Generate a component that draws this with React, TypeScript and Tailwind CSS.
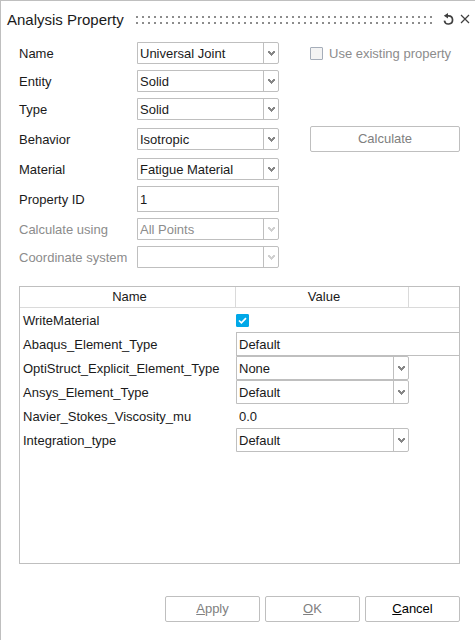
import React from 'react'

interface ComboProps {
  id?: string
  label?: string
  value: string
  disabled?: boolean
  className?: string
}

const comboBase =
  'block w-full appearance-none rounded-r-[2px] border border-[#bfbfbf] bg-white pt-[2px] pr-4 pl-[2px] outline-none disabled:text-[#8c8c8c] disabled:opacity-100'

function Combo({ id, label, value, disabled, className = 'h-[22px]' }: ComboProps) {
  return (
    <div className="relative">
      <select
        id={id}
        aria-label={label}
        defaultValue={value}
        disabled={disabled}
        className={`${comboBase} ${className}`}
      >
        <option value={value}>{value}</option>
      </select>
      <span className="pointer-events-none absolute inset-y-px right-px flex w-[15px] items-center justify-center border-l border-[#bfbfbf] pt-px pl-px">
        <svg
          width="7"
          height="5"
          viewBox="0 0 7 5"
          className={disabled ? 'text-[#d0d0d0]' : 'text-[#868686]'}
          fill="currentColor"
          shapeRendering="crispEdges"
          aria-hidden="true"
        >
          <path d="M0 0h2v1h1v1h1V1h1V0h2v2H6v1H5v1H4v1H3V4H2V3H1V2H0z" />
        </svg>
      </span>
    </div>
  )
}

interface Field {
  id: string
  label: string
  value: string
  kind: 'combo' | 'text'
  disabled?: boolean
}

const fields: Field[] = [
  { id: 'name', label: 'Name', value: 'Universal Joint', kind: 'combo' },
  { id: 'entity', label: 'Entity', value: 'Solid', kind: 'combo' },
  { id: 'type', label: 'Type', value: 'Solid', kind: 'combo' },
  { id: 'behavior', label: 'Behavior', value: 'Isotropic', kind: 'combo' },
  { id: 'material', label: 'Material', value: 'Fatigue Material', kind: 'combo' },
  { id: 'property-id', label: 'Property ID', value: '1', kind: 'text' },
  { id: 'calculate-using', label: 'Calculate using', value: 'All Points', kind: 'combo', disabled: true },
  { id: 'coordinate-system', label: 'Coordinate system', value: '', kind: 'combo', disabled: true },
]

interface Attribute {
  name: string
  value: string
  kind: 'check' | 'wide' | 'combo' | 'plain'
}

const attributes: Attribute[] = [
  { name: 'WriteMaterial', value: '', kind: 'check' },
  { name: 'Abaqus_Element_Type', value: 'Default', kind: 'wide' },
  { name: 'OptiStruct_Explicit_Element_Type', value: 'None', kind: 'combo' },
  { name: 'Ansys_Element_Type', value: 'Default', kind: 'combo' },
  { name: 'Navier_Stokes_Viscosity_mu', value: '0.0', kind: 'plain' },
  { name: 'Integration_type', value: 'Default', kind: 'combo' },
]

function TitleBar() {
  return (
    <header className="flex h-[37px] items-center pr-[5px] pl-[6px]">
      <h1 className="mr-3 text-[15px] leading-5 whitespace-nowrap">Analysis Property</h1>
      <svg className="h-2 min-w-0 flex-1" aria-hidden="true">
        <defs>
          <pattern id="grip" width="6" height="6" patternUnits="userSpaceOnUse">
            <rect width="2" height="2" fill="#8c8c8c" />
          </pattern>
        </defs>
        <rect width="100%" height="8" fill="url(#grip)" />
      </svg>
      <button type="button" aria-label="Reset" className="ml-[10px] pb-[2px]">
        <svg width="11" height="12" viewBox="0 0 11 12" fill="none" aria-hidden="true">
          <path d="M4.5 2.8H5.6A4.1 4.1 0 1 1 1.4 7.6" stroke="#404040" strokeWidth="1.7" />
          <path d="M0.8 2.8L5 0V5.6Z" fill="#404040" />
        </svg>
      </button>
      <button type="button" aria-label="Close" className="ml-[6px] pb-[2px]">
        <svg width="10" height="10" viewBox="0 0 10 10" aria-hidden="true">
          <path d="M1 1L9 9M9 1L1 9" stroke="#404040" strokeWidth="1.2" />
        </svg>
      </button>
    </header>
  )
}

function FieldRow({ field, children }: { field: Field; children?: React.ReactNode }) {
  return (
    <>
      <label
        htmlFor={field.id}
        className={
          field.disabled ? 'pt-[2px] whitespace-nowrap text-[#8c8c8c]' : 'pt-[2px] whitespace-nowrap'
        }
      >
        {field.label}
      </label>
      {field.kind === 'combo' ? (
        <Combo id={field.id} value={field.value} disabled={field.disabled} />
      ) : (
        <input
          id={field.id}
          type="text"
          defaultValue={field.value}
          className="h-[26px] w-full border border-[#bfbfbf] bg-white px-[2px] outline-none"
        />
      )}
      <div className="pl-[31px]">{children}</div>
    </>
  )
}

function AttributeValue({ attribute }: { attribute: Attribute }) {
  switch (attribute.kind) {
    case 'check':
      return (
        <span className="relative block size-[13px]">
          <input
            type="checkbox"
            defaultChecked
            aria-label={attribute.name}
            className="peer block size-[13px] appearance-none rounded-[1px] border border-[#a5adb9] bg-white checked:border-[#00a8e8] checked:bg-[#00a8e8]"
          />
          <svg
            viewBox="0 0 13 13"
            className="pointer-events-none absolute inset-0 hidden size-[13px] peer-checked:block"
            fill="none"
            aria-hidden="true"
          >
            <path d="M3 6.5L5.4 8.8L10 4.2" stroke="white" strokeWidth="1.7" />
          </svg>
        </span>
      )
    case 'combo':
      return <Combo label={attribute.name} value={attribute.value} className="h-6" />
    case 'wide':
      return (
        <input
          type="text"
          aria-label={attribute.name}
          defaultValue={attribute.value}
          className="block h-6 w-full border border-r-0 border-[#bfbfbf] bg-white px-[2px] outline-none"
        />
      )
    default:
      return (
        <input
          type="text"
          aria-label={attribute.name}
          defaultValue={attribute.value}
          className="block h-6 w-full bg-white px-[3px] outline-none"
        />
      )
  }
}

function AttributeTable() {
  return (
    <div className="min-h-[200px] flex-1 border border-[#bfbfbf]">
      <table className="w-full table-fixed border-separate border-spacing-0">
        <colgroup>
          <col className="w-[216px]" />
          <col />
          <col className="w-[50px]" />
        </colgroup>
        <thead>
          <tr className="h-[21px]">
            <th className="border-r border-b border-[#dadada] p-0 pl-1 font-normal">Name</th>
            <th className="border-r border-b border-[#dadada] p-0 pl-1 font-normal">Value</th>
            <th className="border-b border-[#dadada] p-0" />
          </tr>
        </thead>
        <tbody>
          {attributes.map((attribute) => (
            <tr key={attribute.name} className="h-6">
              <td className="p-0 pt-[2px] pl-[3px] whitespace-nowrap">{attribute.name}</td>
              <td className="p-0" colSpan={attribute.kind === 'wide' ? 2 : 1}>
                <AttributeValue attribute={attribute} />
              </td>
              {attribute.kind !== 'wide' && <td className="p-0" />}
            </tr>
          ))}
        </tbody>
      </table>
    </div>
  )
}

const footerButton =
  'h-[26px] w-[95px] rounded-[2px] border border-[#bfbfbf] bg-white text-black disabled:text-[#808080]'

export default function App() {
  return (
    <div className="flex min-h-screen flex-col border-t border-l border-[#bfbfbf] bg-white font-['Liberation_Sans',Arial,sans-serif] text-[13px] leading-4 text-[#1a1a1a]">
      <TitleBar />
      <form className="flex flex-1 flex-col pt-1 pr-[15px] pb-[18px] pl-[18px]">
        <div className="grid grid-cols-[118px_142px_minmax(181px,1fr)] items-center gap-y-[6px]">
          {fields.map((field) => (
            <FieldRow key={field.id} field={field}>
              {field.id === 'name' && (
                <label className="flex items-center gap-[6px] whitespace-nowrap text-[#8c8c8c]">
                  <input
                    type="checkbox"
                    disabled
                    className="size-[13px] appearance-none rounded-[1px] border border-[#a5adb9] bg-[#f3f3f3]"
                  />
                  <span className="pt-[2px]">Use existing property</span>
                </label>
              )}
              {field.id === 'behavior' && (
                <button
                  type="button"
                  disabled
                  className="block h-[26px] w-full rounded-[2px] border border-[#bfbfbf] bg-white text-[#808080]"
                >
                  Calculate
                </button>
              )}
            </FieldRow>
          ))}
        </div>

        <div className="mt-[18px] flex flex-1 flex-col">
          <AttributeTable />
        </div>

        <div className="mt-8 flex justify-end gap-[5px]">
          <button type="button" disabled className={footerButton}>
            <u>A</u>pply
          </button>
          <button type="button" disabled className={footerButton}>
            <u>O</u>K
          </button>
          <button type="button" className={footerButton}>
            <u>C</u>ancel
          </button>
        </div>
      </form>
    </div>
  )
}
